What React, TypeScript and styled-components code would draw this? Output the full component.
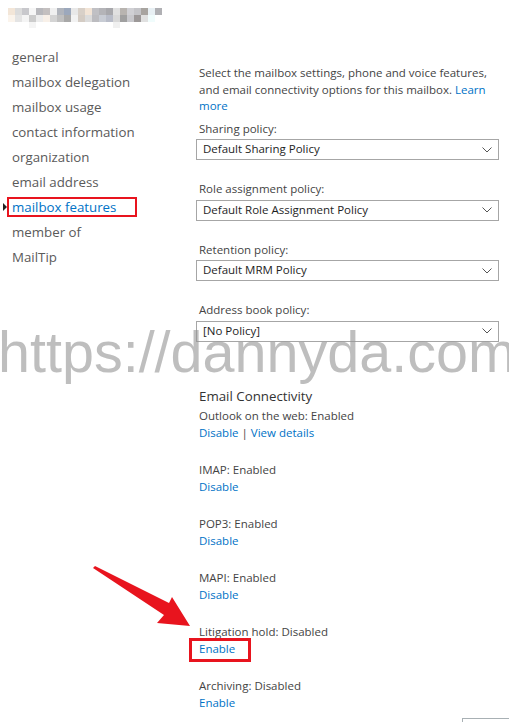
import React from 'react';
import styled, { createGlobalStyle } from 'styled-components';

const GlobalStyle = createGlobalStyle`
  html, body {
    margin: 0;
    padding: 0;
    background: #fff;
  }
  body {
    font-family: "Open Sans", "Noto Sans", sans-serif;
    color: #444;
  }
`;

const navItems = [
  'general',
  'mailbox delegation',
  'mailbox usage',
  'contact information',
  'organization',
  'email address',
  'mailbox features',
  'member of',
  'MailTip',
];

const policies = [
  { label: 'Sharing policy:', value: 'Default Sharing Policy' },
  { label: 'Role assignment policy:', value: 'Default Role Assignment Policy' },
  { label: 'Retention policy:', value: 'Default MRM Policy' },
  { label: 'Address book policy:', value: '[No Policy]' },
];

const connectivity = [
  { label: 'IMAP: Enabled', action: 'Disable' },
  { label: 'POP3: Enabled', action: 'Disable' },
  { label: 'MAPI: Enabled', action: 'Disable' },
  { label: 'Litigation hold: Disabled', action: 'Enable', marked: true },
  { label: 'Archiving: Disabled', action: 'Enable' },
];

const mosaic = [
  ['#f3e6d8', '#dcdcdc', '#c8c8cc', '#f6f6f6', '#b8b8bc', '#c4c0c0', '#f0f0f0', '#b0b4bc', '#9ca8bc', '#e8e8e8', '#d8d0c8', '#f2e4d6', '#c0c0c4', '#b4b4b8', '#a8a8ac', '#e0e0e0', '#b8b4b0', '#d0d0d4', '#c4c4c8', '#a8a4a0', '#e8f0f4', '#b0b0b4'],
  ['#fbf4ec', '#e4e4e4', '#f4f4f4', '#cccccc', '#ececec', '#f8f0e8', '#d4d4d4', '#c0c0c0', '#a8a8a8', '#f2f2f2', '#d4ccc4', '#dcdcdc', '#bcbcc0', '#c8ccd4', '#b8bcc8', '#d8d8d8', '#a0a0a0', '#c8c8cc', '#9c9898', '#e0e0e0', '#f0fcfc', '#ffffff'],
  ['#ffffff', '#ffffff', '#ffffff', '#f4f4f4', '#ffffff', '#ffffff', '#ffffff', '#ffffff', '#ffffff', '#ffffff', '#ffffff', '#ffffff', '#ffffff', '#ffffff', '#ffffff', '#f0f0f0', '#ffffff', '#ffffff', '#ffffff', '#ffffff', '#ffffff', '#ffffff'],
];

function Mosaic() {
  return (
    <svg width="160" height="20" viewBox="0 0 160 20">
      {mosaic.map((row, r) =>
        row.map((c, i) => (
          <rect key={`${r}-${i}`} x={i * 7} y={r * 7} width="7" height="7" fill={c} />
        )),
      )}
    </svg>
  );
}

function Chevron() {
  return (
    <svg width="10" height="6" viewBox="0 0 10 6">
      <path d="M0.5 0.5 L5 5 L9.5 0.5" fill="none" stroke="#555" strokeWidth="1" />
    </svg>
  );
}

function Arrow() {
  return (
    <svg width="100" height="64" viewBox="0 0 100 64">
      <path d="M2 2 L4 0 L78 37 L81 31 L99 60 L66 57 L73 49 Z" fill="#e8141e" />
    </svg>
  );
}

function App() {
  return (
    <Page>
      <GlobalStyle />
      <Header>
        <Mosaic />
      </Header>
      <Body>
        <Nav>
          {navItems.map(item => (
            <NavItem key={item} selected={item === 'mailbox features'}>
              {item}
            </NavItem>
          ))}
        </Nav>
        <Content>
          <Intro>
            Select the mailbox settings, phone and voice features, and email connectivity
            options for this mailbox. <Link>Learn more</Link>
          </Intro>
          {policies.map(p => (
            <Field key={p.label}>
              <FieldLabel>{p.label}</FieldLabel>
              <Select>
                <span>{p.value}</span>
                <Chevron />
              </Select>
            </Field>
          ))}
          <SectionTitle>Email Connectivity</SectionTitle>
          <Group>
            <Label>Outlook on the web: Enabled</Label>
            <Actions>
              <Link>Disable</Link> | <Link>View details</Link>
            </Actions>
          </Group>
          {connectivity.map(c => (
            <Group key={c.label}>
              <Label>{c.label}</Label>
              <Actions>
                <Link marked={c.marked}>{c.action}</Link>
              </Actions>
            </Group>
          ))}
        </Content>
      </Body>
      <CornerBox />
      <Watermark>https://dannyda.com</Watermark>
      <ArrowWrap>
        <Arrow />
      </ArrowWrap>
    </Page>
  );
}

export default App;

const Page = styled.div`
  position: relative;
  width: 509px;
  height: 722px;
  overflow: hidden;
  background: #fff;
`;

const Header = styled.div`
  padding: 8px 0 0 8px;
  height: 26px;
  display: flex;
`;

const Body = styled.div`
  display: flex;
  padding-top: 11px;
`;

const Nav = styled.ul`
  list-style: none;
  margin: 0;
  padding: 0 0 0 12px;
  width: 196px;
  flex-shrink: 0;
  box-sizing: border-box;
`;

const NavItem = styled.li<{ selected?: boolean }>`
  position: relative;
  font-size: 13.3px;
  line-height: 25px;
  height: 25px;
  color: ${p => (p.selected ? '#0072c6' : '#5a5a5a')};
  white-space: nowrap;
  ${p =>
    p.selected &&
    `
    &::before {
      content: '';
      position: absolute;
      left: -9px;
      top: 8px;
      border-style: solid;
      border-width: 4px 0 4px 4px;
      border-color: transparent transparent transparent #222;
    }
    &::after {
      content: '';
      position: absolute;
      left: -5px;
      top: 2px;
      width: 130px;
      height: 20px;
      box-sizing: border-box;
      border: 2px solid #e8141e;
    }
  `}
`;

const Content = styled.div`
  width: 303px;
  padding-top: 20px;
  font-size: 11.5px;
  line-height: 16.5px;
`;

const Intro = styled.p`
  margin: 0 0 6px 3px;
  padding-right: 6px;
  color: #444;
`;

const Link = styled.span<{ marked?: boolean }>`
  color: #0072c6;
  position: relative;
  ${p =>
    p.marked &&
    `
    &::after {
      content: '';
      position: absolute;
      left: -10px;
      top: -3px;
      right: -16px;
      bottom: -6px;
      border: 3px solid #e8141e;
    }
  `}
`;

const Field = styled.div`
  display: flex;
  flex-direction: column;
  margin-bottom: 21px;
`;

const Label = styled.div`
  color: #444;
  padding-left: 3px;
`;

const FieldLabel = styled(Label)`
  margin-bottom: 2px;
`;

const Select = styled.div`
  display: flex;
  align-items: center;
  justify-content: space-between;
  height: 21px;
  box-sizing: border-box;
  border: 1px solid #a6a6a6;
  padding: 0 6px 0 6px;
  color: #1e1e1e;
`;

const SectionTitle = styled.div`
  font-size: 13.3px;
  color: #333;
  padding-left: 3px;
  margin-top: 46px;
  margin-bottom: 4px;
`;

const Group = styled.div`
  margin-bottom: 21px;
`;

const Actions = styled.div`
  padding-left: 3px;
  color: #444;
`;

const CornerBox = styled.div`
  position: absolute;
  left: 462px;
  top: 718px;
  width: 60px;
  height: 20px;
  border: 1px solid #a8b0b4;
`;

const Watermark = styled.div`
  position: absolute;
  left: -2px;
  top: 317px;
  font-family: "Liberation Sans", Arial, sans-serif;
  font-size: 57.5px;
  line-height: 70px;
  color: rgba(150, 150, 150, 0.62);
  white-space: nowrap;
  pointer-events: none;
`;

const ArrowWrap = styled.div`
  position: absolute;
  left: 91px;
  top: 566px;
  display: flex;
`;
